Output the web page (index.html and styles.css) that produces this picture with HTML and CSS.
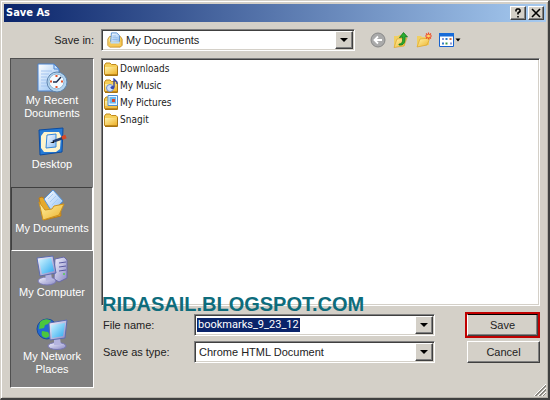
FILE: index.html
```html
<!DOCTYPE html>
<html lang="en">
<head>
<meta charset="utf-8">
<title>Save As</title>
<link rel="stylesheet" href="styles.css">
</head>
<body>
<svg class="defs" aria-hidden="true">
  <defs>
    <linearGradient id="gold" x1="0" y1="0" x2="1" y2="1"><stop offset="0" stop-color="#fff3a8"/><stop offset="1" stop-color="#eeb22c"/></linearGradient>
    <linearGradient id="screen" x1="0" y1="0" x2="1" y2="1"><stop offset="0" stop-color="#d2f4ff"/><stop offset="1" stop-color="#2caaf0"/></linearGradient>
    <linearGradient id="paper" x1="0" y1="0" x2="1" y2="1"><stop offset="0" stop-color="#ffffff"/><stop offset="1" stop-color="#8cbcf2"/></linearGradient>
    <linearGradient id="metal" x1="0" y1="0" x2="1" y2="1"><stop offset="0" stop-color="#f4f4ff"/><stop offset="1" stop-color="#8888c4"/></linearGradient>
    <symbol id="folder" viewBox="0 0 16 16">
      <path d="M1.500 4 3 2h4l1.500 1.500H13L14.500 5v8.500h-13z" fill="#f6cf58" stroke="#c18a1c"/>
      <path d="M2 6h12v7H2z" fill="url(#gold)"/>
      <path d="M2 14.500h12.500V6" fill="none" stroke="#a87412"/>
    </symbol>
  </defs>
</svg>
<main class="dialog">
  <header class="titlebar">
    <h1>Save As</h1>
    <button class="caption" aria-label="Help"><svg viewBox="0 0 12 10"><path d="M4 3.500V2l1-1h2l1 1v1.500L6 5v1.500M6 8v1.500" fill="none" stroke="#000" stroke-width="1.600"/></svg></button>
    <button class="caption" aria-label="Close"><svg viewBox="0 0 12 10"><path d="m2 1 8 8M10 1 2 9" stroke="#000" stroke-width="1.600"/></svg></button>
  </header>

  <div class="toolbar">
    <label class="lookin" for="lookin">Save in:</label>
    <div class="combo location">
      <svg class="icon18" viewBox="0 0 18 18">
        <path d="M1 8 3 5h12l2 3v7l-2 2H3l-2-2z" fill="url(#gold)" stroke="#c48a1c"/>
        <path d="M5 1h6l3 3v8H4z" fill="url(#paper)" stroke="#4d8ad0"/>
        <path d="M6 4.500h4M6 6.500h6M6 8.500h6" stroke="#8ab6e8"/>
        <path d="M2 11h14v4l-1 1H3l-1-1z" fill="#f5c857"/>
        <path d="M4 11h10v2H4z" fill="#b8daf6"/>
      </svg>
      <select id="lookin"><option>My Documents</option></select>
    </div>
    <nav class="tools" aria-label="Folder tools">
      <button aria-label="Back"><svg viewBox="0 0 16 16"><circle cx="8" cy="8" r="7" fill="#aaa" stroke="#888"/><path d="M12 8H5M8 4.500 4.500 8 8 11.500" fill="none" stroke="#fff" stroke-width="1.800"/></svg></button>
      <button aria-label="Up one level"><svg viewBox="0 0 16 16"><path d="M1 4h4l1-1h6v11l-11 1.500z" fill="#f0cf62"/><path d="m4 7 10-1-3 8-10 1.500z" fill="url(#gold)" stroke="#d69d25" stroke-width=".6"/><path d="M6 12c3 0 4-2 3.500-7L6.500 5.500 10.500.5 14.500 5l-2.500-.3c.6 6-1.500 9-6 8.300z" fill="#29ad31" stroke="#117719" stroke-width=".8"/></svg></button>
      <button aria-label="New folder"><svg viewBox="0 0 16 16"><path d="M1 4h4l1 1h7v8l-12 2z" fill="#f0cf62"/><path d="m4 7 10-1-3 7-10 2z" fill="url(#gold)" stroke="#d69d25" stroke-width=".6"/><path d="M12.500.5v7M9 4h7M10 1.500l5 5M15 1.500l-5 5" stroke="#f04a24" stroke-width="1.200"/><circle cx="12.500" cy="4" r="1.500" fill="#ffd96a"/></svg></button>
      <button class="views" aria-label="View menu"><svg viewBox="0 0 22 16"><path d="M.5 1.500h14v13H.5z" fill="#fff" stroke="#1762ce"/><path d="M0 1h15v3.500H0z" fill="#176ad8"/><path d="M3 6h2v2H3zM11 10.500h2v2h-2z" fill="#8a9ad8"/><path d="M6.500 6h2v2h-2zM3 10.500h2v2H3z" fill="#327ac9"/><path d="M10.500 6h2v2h-2z" fill="#cc7048"/><path d="M6.500 10.500h2v2h-2z" fill="#39994b"/><path d="M16.500 6.500h5L19 9.500z" fill="#000"/></svg></button>
    </nav>
  </div>

  <div class="content">
    <nav class="places" aria-label="Places">
      <button class="place">
        <svg viewBox="0 0 32 32">
          <path d="M2 2h16l5 5v22H2z" fill="url(#paper)" stroke="#4b83cf"/>
          <path d="M18 2v5h5z" fill="#c5e1ff" stroke="#4b83cf"/>
          <path d="M5 9h11M5 12h8M5 15h6M5 18h6M5 21h6M5 24h8" stroke="#a4c4ef"/>
          <circle cx="21" cy="20" r="10" fill="#b4d4ee" stroke="#5e84ad"/>
          <circle cx="20.500" cy="19.500" r="7.500" fill="#f3faff" stroke="#8eb4d6"/>
          <path d="M20.500 13v2M20.500 24v2M14 19.500h2M25 19.500h2" stroke="#e5532c" stroke-width="2"/>
          <path d="m25 15-4.500 5H17" fill="none" stroke="#1c2e50" stroke-width="1.500"/>
        </svg>
        <span>My Recent Documents</span>
      </button>
      <button class="place">
        <svg viewBox="0 0 32 32">
          <path d="m3 4 24-2-1 24-22 3z" fill="#267bd6" stroke="#0d4ca0"/>
          <path d="M8 6h15l2 4-1 13-4 3H8l-3-4V10z" fill="#fff4cc"/>
          <path d="m11 9 9-1v13l-10 1z" fill="url(#paper)" stroke="#3587d9"/>
          <path d="m17 15.500 10-3.500" stroke="#253f70" stroke-width="2.500"/>
          <path d="m26 12 4-1.500" stroke="#d84824" stroke-width="4"/>
          <path d="m14 17 4-2v2z" fill="#111"/>
        </svg>
        <span>Desktop</span>
      </button>
      <button class="place selected" aria-current="true">
        <svg viewBox="0 0 32 32">
          <path d="m3 8 3-1 4 3 14 2 1 14-17 4z" fill="#e5a92c" stroke="#bd7d16"/>
          <path d="m8 9 9-9 10 11-11 11z" fill="url(#paper)" stroke="#5494db"/>
          <path d="m12 9 5-5M14 12l6-6M16 15l6-6" stroke="#a7cdf4"/>
          <path d="m3 12 6 8 7-1 2-3 10-2-5 11-16 5z" fill="url(#gold)" stroke="#cf931d"/>
        </svg>
        <span>My Documents</span>
      </button>
      <button class="place">
        <svg viewBox="0 0 32 32">
          <path d="m19 5 9-2 3 3v18l-8 4-5-3z" fill="url(#metal)" stroke="#6868a8"/>
          <path d="m23 9 7-1M23 13l7-1M23 17l7-1" stroke="#5959a0"/>
          <circle cx="28" cy="20" r="1" fill="#54cc50"/>
          <ellipse cx="11" cy="27" rx="9" ry="4" fill="url(#metal)" stroke="#7777b4"/>
          <path d="m9 19 6-1 1 8-6 1z" fill="#b4b4df"/>
          <path d="m1 4 16-2 3 17-16 3z" fill="url(#metal)" stroke="#5c6cae"/>
          <path d="m3 6 12-2 3 13-12 3z" fill="url(#screen)"/>
        </svg>
        <span>My Computer</span>
      </button>
      <button class="place">
        <svg viewBox="0 0 32 32">
          <circle cx="11" cy="11" r="10" fill="#2268d4" stroke="#164b9c"/>
          <path d="M4 4c4-4 9-3 11-1l-3 3-3 1-1 3-5 1zM6 13l6 1 2 4-4 2c-4-1-5-3-4-7z" fill="#4bc63e"/>
          <ellipse cx="21" cy="28" rx="9" ry="3.500" fill="url(#metal)" stroke="#7777b4"/>
          <path d="M18 20h6l1 7h-7z" fill="#b4b4df"/>
          <path d="m13 5 18-3-2 18-15 2z" fill="url(#metal)" stroke="#5c6cae"/>
          <path d="m15 7 14-2-2 13-11 2z" fill="url(#screen)"/>
        </svg>
        <span>My Network Places</span>
      </button>
    </nav>

    <section class="main">
      <ul class="files">
        <li><svg class="icon16"><use href="#folder"/></svg>Downloads</li>
        <li><svg class="icon16" viewBox="0 0 16 16"><use href="#folder"/><circle cx="7" cy="10" r="3.500" fill="#cfe0fa" stroke="#6f8fd0"/><path d="M11 9V1l3 3v2" fill="none" stroke="#2d40a4" stroke-width="1.300"/><ellipse cx="9.500" cy="9.500" rx="2" ry="1.500" fill="#3446b0"/></svg>My Music</li>
        <li><svg class="icon16" viewBox="0 0 16 16"><use href="#folder"/><path d="M5 .5h9.500v10H5z" fill="#eaf6ff" stroke="#4f8ed3"/><path d="M6.500 2H13v6.500H6.500z" fill="#69b8f2"/><path d="M9 4h3v3H9z" fill="#d94832"/><path d="M2 11h12v2H2z" fill="#f0bd45"/></svg>My Pictures</li>
        <li><svg class="icon16"><use href="#folder"/></svg>Snagit</li>
      </ul>
      <div class="watermark">RIDASAIL.BLOGSPOT.COM</div>
      <form class="fields">
        <label for="filename">File name:</label>
        <div class="combo">
          <input id="filename" type="text" value="bookmarks_9_23_12" spellcheck="false">
        </div>
        <div class="default"><button type="button" class="push">Save</button></div>
        <label for="filetype">Save as type:</label>
        <div class="combo">
          <select id="filetype"><option>Chrome HTML Document</option></select>
        </div>
        <button type="button" class="push cancel">Cancel</button>
      </form>
    </section>
  </div>
  <svg class="grip" viewBox="0 0 12 12" aria-hidden="true"><path d="M0 12 12 0M4 12l8-8M8 12l4-4" stroke="#fff"/><path d="M1 12 12 1M2 12 12 2M5 12l7-7M6 12l6-6M9 12l3-3" stroke="#8a8780"/></svg>
</main>
</body>
</html>
```
FILE: styles.css
```css
* { box-sizing: border-box; }

body {
  margin: 0;
  background: #d4d0c8;
  color: #222;
  font: 11px/13px "Liberation Sans", Arial, sans-serif;
}

button, input, select { font: inherit; color: inherit; }
button { padding: 0; }
svg { display: block; flex: none; }
.defs { position: absolute; width: 0; height: 0; }

.dialog {
  position: relative;
  display: flex;
  flex-direction: column;
  min-height: 100vh;
  padding: 3px 2px 10px 3px;
  background: #d4d0c8;
  border: 1px solid #d4d0c8;
  border-right: 2px solid #404040;
  border-bottom: 2px solid #404040;
  box-shadow: inset 1px 1px #fff, inset -1px -1px #b4b0a8;
}

.titlebar {
  display: flex;
  align-items: center;
  height: 18px;
  padding: 0 2px;
  background: linear-gradient(to right, #0a246a, #a6caf0);
}

.titlebar h1 {
  flex: 1;
  margin: 0;
  color: #fff;
  font: bold 11px/16px "DejaVu Sans Condensed", "DejaVu Sans", sans-serif;
}

.caption, .push, .combo::after {
  background: #d4d0c8;
  border: 1px solid;
  border-color: #fff #404040 #404040 #fff;
  box-shadow: inset -1px -1px #808080;
}

.caption {
  display: grid;
  place-items: center;
  width: 16px;
  height: 14px;
}
.caption + .caption { margin-left: 2px; }
.caption svg { width: 12px; height: 10px; }

.toolbar {
  display: flex;
  align-items: center;
  padding: 7px 0 7px 6px;
}

.lookin {
  width: 84px;
  margin-right: 7px;
  text-align: right;
}

.combo {
  position: relative;
  display: flex;
  align-items: center;
  height: 22px;
  padding: 2px;
  background: #fff;
  border: 1px solid;
  border-color: #808080 #fff #fff #808080;
  box-shadow: inset 1px 1px #404040, inset -1px -1px #d4d0c8;
}

.combo::after {
  content: "";
  position: absolute;
  top: 1px;
  right: 1px;
  bottom: 1px;
  width: 16px;
  pointer-events: none;
}

.combo::before {
  content: "";
  position: absolute;
  z-index: 1;
  top: 8px;
  right: 6px;
  border: solid transparent;
  border-width: 4px 4px 0;
  border-top-color: #000;
  pointer-events: none;
}

.location { flex: 0 1 254px; }
.icon18 { width: 16px; height: 16px; margin: 0 1px 0 3px; }

.combo select {
  flex: 1;
  height: 16px;
  padding: 0 18px 0 2px;
  border: 0;
  outline: 0;
  background: transparent;
  appearance: none;
}

.combo input {
  field-sizing: content;
  height: 14px;
  padding: 0 1px;
  border: 0;
  outline: 0;
  background: #0a246a;
  color: #fff;
  font: 11px/14px Roboto, "Liberation Sans", sans-serif;
}

.tools {
  display: flex;
  gap: 7px;
  margin-left: 15px;
}
.tools button { border: 0; background: none; }
.tools svg { width: 16px; height: 16px; }
.tools .views svg { width: 22px; }

.content {
  flex: 1;
  display: flex;
  gap: 7px;
  padding: 0 6px;
}

.places {
  flex: none;
  width: 84px;
  background: #808080;
  border: 1px solid;
  border-color: #505050 #fff #fff #505050;
}

.place {
  display: flex;
  flex-direction: column;
  align-items: center;
  width: 100%;
  height: 64px;
  padding: 2px 0 0;
  border: 1px solid transparent;
  background: none;
  color: #fff;
}
.place svg { width: 32px; height: 32px; }
.place span { width: 78px; text-align: center; }

.selected {
  border-color: #404040 #fff #fff #404040;
}

.main {
  flex: 1;
  min-width: 0;
  display: flex;
  flex-direction: column;
}

.files {
  flex: 1;
  margin: 0;
  padding: 1px;
  list-style: none;
  background: #fff;
  border: 1px solid;
  border-color: #808080 #fff #fff #808080;
  box-shadow: inset 1px 1px #404040, inset -1px -1px #d4d0c8;
  font: 10px/17px "DejaVu Sans Condensed", "DejaVu Sans", sans-serif;
}
.files li { display: flex; align-items: center; gap: 1px; }
.icon16 { width: 16px; height: 16px; }

.watermark {
  position: relative;
  height: 16px;
  margin-top: -10px;
  padding-left: 1px;
  color: #0e6c7c;
  font: bold 20px/16px "Liberation Sans", Arial, sans-serif;
}

.fields {
  display: grid;
  grid-template-columns: 91px 1fr 75px;
  align-items: center;
  row-gap: 3px;
  padding-left: 2px;
  margin-bottom: 25px;
}
.fields .combo { margin-right: 30px; }

.push { width: 100%; height: 22px; }
.default { border: 2px solid #c00000; }
.default .push { display: block; border-top-color: #000; }
.cancel { width: auto; margin-left: 2px; }

.grip {
  position: absolute;
  right: 2px;
  bottom: 2px;
  width: 12px;
  height: 12px;
}
```
